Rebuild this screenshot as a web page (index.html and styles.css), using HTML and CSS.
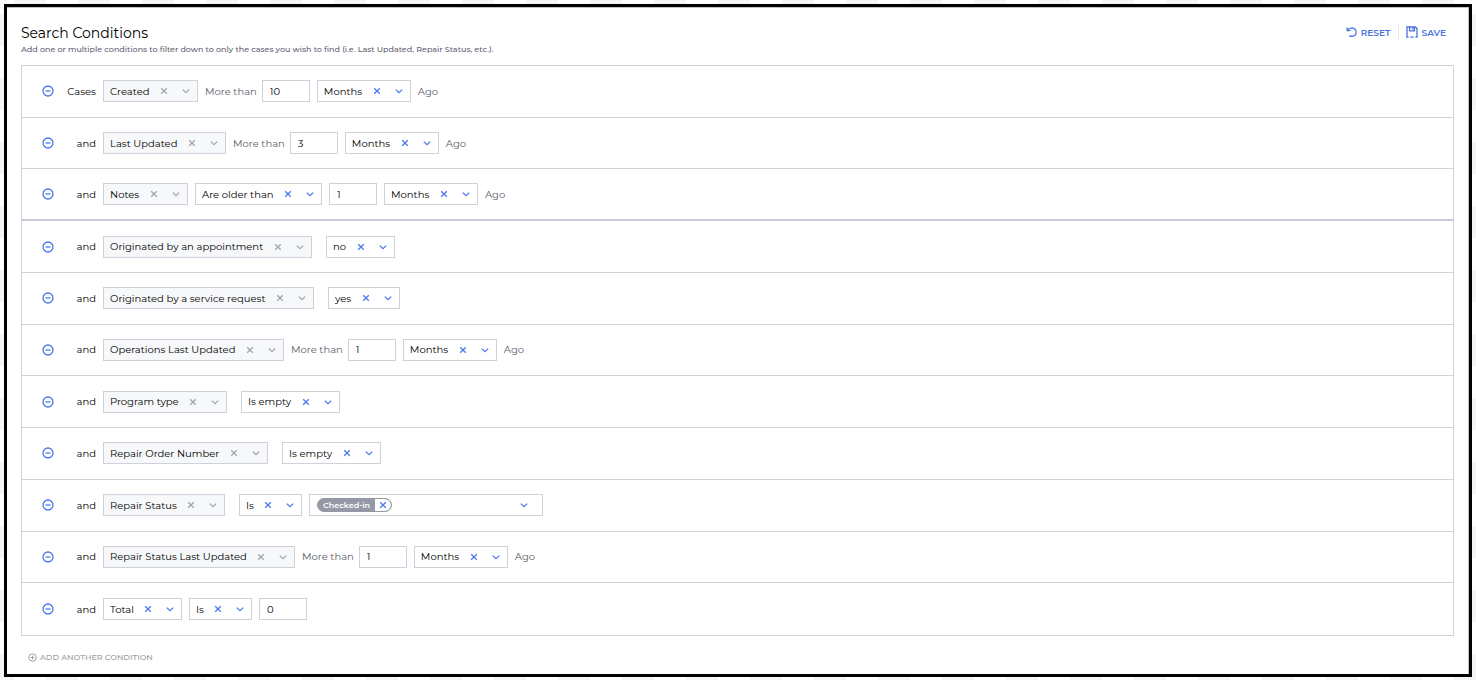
FILE: index.html
```html
<!DOCTYPE html>
<html lang="en">
<head>
<meta charset="utf-8">
<title>Search Conditions</title>
<link rel="stylesheet" href="styles.css">
</head>
<body>
<svg class="sprite" aria-hidden="true">
  <symbol id="minus" viewBox="0 0 12 12"><circle cx="6" cy="6" r="5"/><path d="M3.6 6h4.8"/></symbol>
  <symbol id="plus" viewBox="0 0 12 12"><circle cx="6" cy="6" r="5"/><path d="M3.4 6h5.2M6 3.4v5.2"/></symbol>
  <symbol id="x" viewBox="0 0 8 8"><path d="M1.2 1.2l5.6 5.6M6.8 1.2L1.2 6.8"/></symbol>
  <symbol id="chev" viewBox="0 0 8 8"><path d="M.8 2.6L4 5.6l3.2-3"/></symbol>
</svg>
<main class="panel">
  <header class="head">
    <div>
      <h1 class="title">Search Conditions</h1>
      <p class="subtitle">Add one or multiple conditions to filter down to only the cases you wish to find (i.e. Last Updated, Repair Status, etc.).</p>
    </div>
    <div class="actions">
      <button class="action" type="button"><svg class="action-icon" viewBox="0 0 12 12" aria-hidden="true"><path d="M1.2 1.4v3.2h3.4M1.4 4.4C2.6 2.6 4.2 1.8 6 1.8A4.3 4.3 0 1 1 3.4 9.6"/></svg>RESET</button>
      <button class="action" type="button"><svg class="action-icon" viewBox="0 0 12 12" aria-hidden="true"><path d="M2.6 11.2H1V1h8.4L11 2.6v8.6H9.4M3.6 1v3.8h4.8V1M4.4 11.2h3.4M6.8 2v1.4"/></svg>SAVE</button>
    </div>
  </header>
  <ul class="list" id="list"></ul>
  <button class="add" type="button"><svg class="add-icon" aria-hidden="true"><use href="#plus"/></svg>ADD ANOTHER CONDITION</button>
</main>
<script src="app.js"></script>
</body>
</html>
```

FILE: styles.css
```css
* { box-sizing: border-box; }
body {
  margin: 0;
  padding: 4px 4px 3px;
  min-height: 100vh;
  display: flex;
  background: repeating-conic-gradient(#f5f5f5 0 25%, #fff 0 50%) 14px 14px / 64px 64px;
  font-family: Montserrat, Inter, "Liberation Sans", sans-serif;
  font-size: 10px;
  font-weight: 400;
  color: #000;
}
button, input, select { font: inherit; color: inherit; margin: 0; padding: 0; border: 0; background: none; }
button { cursor: pointer; }
ul, h1, p { margin: 0; padding: 0; list-style: none; }
svg { fill: none; stroke: currentColor; stroke-width: 1.3; }
.sprite { position: absolute; width: 0; height: 0; }

.panel {
  flex: 1;
  display: flex;
  flex-direction: column;
  padding: 18px 15px 10px 14px;
  border: 3px solid #000;
  background: #fff;
  box-shadow: inset -1px 1px 0 #c2c3c8;
}
.head { display: flex; justify-content: space-between; align-items: flex-start; }
.title { font-size: 14px; line-height: 17px; font-weight: 400; }
.subtitle { font-size: 8px; line-height: 14px; font-weight: 500; color: #5f6070; }
.actions { display: flex; }
.action { display: flex; align-items: center; gap: 3px; height: 14px; padding: 0 8px 0 7px; font-size: 9px; font-weight: 600; color: #4a72e0; }
.action + .action { border-left: 1px solid #e6e8ee; }
.action-icon { width: 12px; height: 12px; }

.list {
  flex: 1;
  display: grid;
  grid-auto-rows: 1fr;
  margin-top: 9px;
  border: 1px solid #d0d3dc;
}
.row { display: flex; align-items: center; gap: 7px; min-height: 40px; padding-left: 20px; border-bottom: 1px solid #d0d3dc; }
.row:last-child { border-bottom: 0; }
.row.divided { border-bottom: 2px solid #c8cbd6; }
.remove { display: flex; color: #4a78ee; }
.remove-icon { width: 12px; height: 12px; }
.joiner { width: 35px; display: flex; justify-content: flex-end; }
.note { color: #5c5e6c; }
.spacer { width: 0; }
.note + .number { margin-left: -2px; }

.combo { display: flex; align-items: center; height: 22px; padding: 0 2px 0 6px; border: 1px solid #cfd2dc; }
.combo.muted { background: #f7f8fa; }
.select { appearance: none; height: 20px; outline-offset: 2px; }
.clear { display: flex; padding: 0 9px 0 10px; color: #4a78ee; }
.icon { width: 8px; height: 8px; }
.chevron { width: 8px; height: 8px; margin: 0 5px; color: #4a78ee; }
.muted .clear, .muted .chevron { color: #a2a5ae; }
.number { width: 48px; height: 22px; padding: 0 7px; border: 1px solid #cfd2dc; }

.multi { width: 234px; padding-right: 9px; }
.multi .select { flex: 1; min-width: 0; }
.tag { display: flex; align-items: center; height: 14px; margin-left: 1px; border: 1px solid #9698a6; border-radius: 7px; background: #9698a6; color: #fff; font-size: 8px; font-weight: 600; overflow: hidden; }
.tag-text { padding: 0 5px; }
.tag-x { display: flex; align-items: center; height: 12px; padding: 0 4px; border-radius: 0 6px 6px 0; background: #fff; color: #4a78ee; }

.add { display: flex; align-items: center; align-self: flex-start; gap: 3px; margin-top: 14px; padding-left: 7px; height: 14px; font-size: 8px; font-weight: 500; color: #9c9ea4; }
.add-icon { width: 9px; height: 9px; }
```

FILE: app.js
```js
const muted = (value) => ({ type: "combo", value, muted: true });
const combo = (value) => ({ type: "combo", value });
const number = (value) => ({ type: "number", value });
const note = (value) => ({ type: "note", value });
const tags = (value) => ({ type: "tags", value });
const gap = { type: "gap" };
const age = (n) => [note("More than"), number(n), combo("Months"), note("Ago")];

const conditions = [
  [muted("Created"), ...age(10)],
  [muted("Last Updated"), ...age(3)],
  [muted("Notes"), combo("Are older than"), number(1), combo("Months"), note("Ago")],
  [muted("Originated by an appointment"), gap, combo("no")],
  [muted("Originated by a service request"), gap, combo("yes")],
  [muted("Operations Last Updated"), ...age(1)],
  [muted("Program type"), gap, combo("Is empty")],
  [muted("Repair Order Number"), gap, combo("Is empty")],
  [muted("Repair Status"), gap, combo("Is"), tags("Checked-in")],
  [muted("Repair Status Last Updated"), ...age(1)],
  [combo("Total"), combo("Is"), number(0)],
];
const dividedRow = 2;

const icon = (name, cls) => `<svg class="${cls}" aria-hidden="true"><use href="#${name}"/></svg>`;

function field(f) {
  switch (f.type) {
    case "combo":
      return `<div class="combo${f.muted ? " muted" : ""}"><select class="select" aria-label="${f.value}"><option>${f.value}</option></select><button class="clear" type="button" aria-label="Clear ${f.value}">${icon("x", "icon")}</button>${icon("chev", "chevron")}</div>`;
    case "number":
      return `<input class="number" type="text" inputmode="numeric" aria-label="Value" value="${f.value}">`;
    case "note":
      return `<span class="note">${f.value}</span>`;
    case "tags":
      return `<div class="combo multi"><span class="tag"><span class="tag-text">${f.value}</span><button class="tag-x" type="button" aria-label="Remove ${f.value}">${icon("x", "icon")}</button></span><select class="select" aria-label="Statuses"><option></option></select>${icon("chev", "chevron")}</div>`;
    default:
      return `<span class="spacer"></span>`;
  }
}

document.getElementById("list").innerHTML = conditions.map((fields, i) =>
  `<li class="row${i === dividedRow ? " divided" : ""}"><button class="remove" type="button" aria-label="Remove condition">${icon("minus", "remove-icon")}</button><span class="joiner">${i ? "and" : "Cases"}</span>${fields.map(field).join("")}</li>`
).join("");
```
